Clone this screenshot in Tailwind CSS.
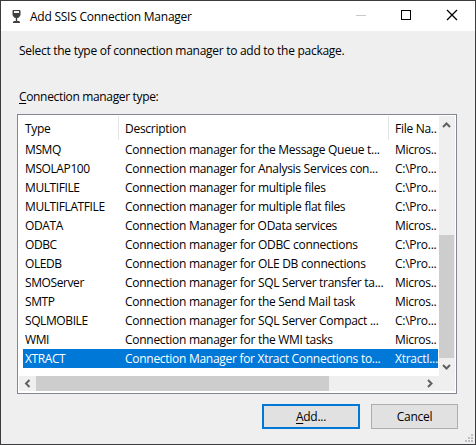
<!DOCTYPE html>
<html lang="en">
<head>
<meta charset="utf-8">
<title>Add SSIS Connection Manager</title>
<script src="https://cdn.jsdelivr.net/npm/@tailwindcss/browser@4"></script>
</head>
<body class="overflow-hidden">
<main class="relative flex h-[445px] w-[476px] flex-col border border-[#3b3a3d] bg-[#efefef] font-['Open_Sans','Noto_Sans',sans-serif] text-[12px] leading-[19px] tracking-[-0.28px] whitespace-nowrap text-black">
  <header class="flex h-[30px] shrink-0 items-center bg-white">
    <svg class="ml-[11px] h-[15px] w-[9px]" viewBox="0 0 9 15" fill="#3f3f3f"><path d="M1 1h7l.5 1v4L7 8.500 5.200 9v3H7l1 1v1H1v-1l1-1h1.800V9L2 8.500.5 6V2z"/><path d="M2 2h5v2H2z" fill="#f4f4f4"/></svg>
    <h1 class="ml-[9px] tracking-[-0.24px]">Add SSIS Connection Manager</h1>
    <svg class="ml-auto h-[30px] w-[120px]" viewBox="0 0 120 30" fill="none" shape-rendering="crispEdges"><path d="M1 14.5h10" stroke="#c8c8c8"/><path d="M46.5 9.500h9v9h-9z" stroke="#000"/><path d="M92 9l10 10M102 9l-10 10" stroke="#000" stroke-width="1.3" shape-rendering="auto"/></svg>
  </header>
  <p class="mt-[10px] ml-[18px]">Select the type of connection manager to add to the package.</p>
  <p class="mt-[27px] ml-[18px] tracking-[-0.34px]"><span class="underline underline-offset-2">C</span>onnection manager type:</p>
  <section class="mt-[8px] ml-[16px] flex h-[280px] w-[440px] shrink-0 flex-col border border-[#828790] bg-white p-px">
    <div class="flex h-[260px]">
      <div class="w-[420px]">
        <div class="flex h-[24px] items-center leading-[23px]">
          <span class="w-[99px] pl-[6px]">Type</span>
          <div class="flex h-full w-[270px] items-center border-l border-[#e5e5e5] pl-[6px]">Description</div>
          <div class="flex h-full items-center border-l border-[#e5e5e5] pl-[6px]">File Na..</div>
        </div>
        <div id="rows" class="ml-[4px] w-[415px]"></div>
      </div>
      <div class="flex w-[16px] flex-col bg-[#efefef]">
        <svg class="h-[17px] w-[15px]" viewBox="0 0 15 17" fill="none"><path d="M4 11l3.500-3.500L11 11" stroke="#606060" stroke-width="2"/></svg>
        <div class="mt-[102px] h-[123px] w-[15px] bg-[#cdcdcd]"></div>
        <svg class="h-[18px] w-[15px]" viewBox="0 0 15 18" fill="none"><path d="M4 7l3.500 3.500L11 7" stroke="#606060" stroke-width="2"/></svg>
      </div>
    </div>
    <div class="flex h-[15px] bg-[#efefef]">
      <svg class="h-[15px] w-[17px]" viewBox="0 0 17 15" fill="none"><path d="M10.500 4L7 7.500l3.500 3.500" stroke="#606060" stroke-width="2"/></svg>
      <div class="h-[15px] w-[293px] bg-[#cdcdcd]"></div>
      <svg class="ml-[93px] h-[15px] w-[17px]" viewBox="0 0 17 15" fill="none"><path d="M6 4l3.500 3.500L6 11" stroke="#606060" stroke-width="2"/></svg>
    </div>
  </section>
  <footer class="mt-[10px] ml-[261px] flex gap-[11px]">
    <button class="h-[25px] w-[98px] border-2 border-[#0078d7] bg-[#e1e1e1] leading-[21px]"><span class="underline underline-offset-2">A</span>dd...</button>
    <button class="h-[25px] w-[87px] border border-[#adadad] bg-[#e1e1e1] leading-[23px]">Cancel</button>
  </footer>
  <svg class="absolute right-[1px] bottom-[1px] h-[9px] w-[9px]" viewBox="0 0 9 9" fill="#bfbfbf"><path d="M6 0h2v2H6zM3 3h2v2H3zM6 3h2v2H6zM0 6h2v2H0zM3 6h2v2H3zM6 6h2v2H6z"/></svg>
</main>
<script>
const rows = [
  ['MSMQ', 'Connection manager for the Message Queue t...', 'Micros..'],
  ['MSOLAP100', 'Connection manager for Analysis Services con...', 'C:\\Pro...'],
  ['MULTIFILE', 'Connection manager for multiple files', 'C:\\Pro...'],
  ['MULTIFLATFILE', 'Connection manager for multiple flat files', 'C:\\Pro...'],
  ['ODATA', 'Connection Manager for OData services', 'Micros..'],
  ['ODBC', 'Connection manager for ODBC connections', 'C:\\Pro...'],
  ['OLEDB', 'Connection manager for OLE DB connections', 'C:\\Pro...'],
  ['SMOServer', 'Connection manager for SQL Server transfer ta...', 'Micros..'],
  ['SMTP', 'Connection manager for the Send Mail task', 'Micros..'],
  ['SQLMOBILE', 'Connection manager for SQL Server Compact ...', 'C:\\Pro...'],
  ['WMI', 'Connection manager for the WMI tasks', 'Micros..'],
  ['XTRACT', 'Connection Manager for Xtract Connections to...', 'XtractI...'],
];
document.getElementById('rows').innerHTML = rows.map(([type, text, file], i) => `
  <div class="flex h-[19px] ${i === rows.length - 1 ? 'bg-[#0078d7] text-white' : ''}">
    <span class="w-[100px] shrink-0 pl-[2px] tracking-[-0.4px]">${type}</span>
    <span class="w-[270px] shrink-0 pl-[2px]">${text}</span>
    <span class="pl-[2px]">${file}</span>
  </div>`).join('');
</script>
</body>
</html>
